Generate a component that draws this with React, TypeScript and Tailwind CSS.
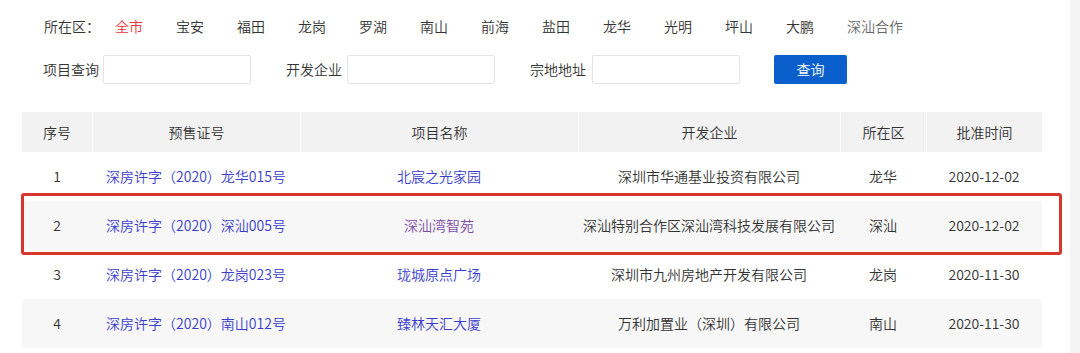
import React from "react";

const districts = ["全市", "宝安", "福田", "龙岗", "罗湖", "南山", "前海", "盐田", "龙华", "光明", "坪山", "大鹏", "深汕合作"];

type Row = { no: string; cert: string; name: string; dev: string; area: string; date: string; visited?: boolean };

const rows: Row[] = [
  { no: "1", cert: "深房许字（2020）龙华015号", name: "北宸之光家园", dev: "深圳市华通基业投资有限公司", area: "龙华", date: "2020-12-02" },
  { no: "2", cert: "深房许字（2020）深汕005号", name: "深汕湾智苑", dev: "深汕特别合作区深汕湾科技发展有限公司", area: "深汕", date: "2020-12-02", visited: true },
  { no: "3", cert: "深房许字（2020）龙岗023号", name: "珑城原点广场", dev: "深圳市九州房地产开发有限公司", area: "龙岗", date: "2020-11-30" },
  { no: "4", cert: "深房许字（2020）南山012号", name: "臻林天汇大厦", dev: "万利加置业（深圳）有限公司", area: "南山", date: "2020-11-30" },
];

const headers = ["序号", "预售证号", "项目名称", "开发企业", "所在区", "批准时间"];

export default function App() {
  return (
    <div className="flex h-[353px] w-[1080px] overflow-hidden bg-white font-['Noto_Sans_CJK_SC',sans-serif] text-[14px] font-[350] text-[#333]">
      <div className="relative flex-1">
        {/* District filter */}
        <div className="flex items-center pl-[44px] pt-[17px] leading-[18px]">
          <span className="w-[71px]">所在区：</span>
          {districts.map((d, i) => (
            <span
              key={d}
              className={
                i === 0
                  ? "w-[61px] text-[#e8363c]"
                  : d === "深汕合作"
                  ? "w-[61px] whitespace-nowrap text-[#666]"
                  : "w-[61px]"
              }
            >
              {d}
            </span>
          ))}
        </div>

        {/* Search row */}
        <div className="mt-[19px] flex h-[30px] items-center pl-[43px]">
          <span className="w-[60px]">项目查询</span>
          <div className="h-[29px] w-[148px] rounded-[2px] border border-[#e3e3e3] bg-white" />
          <span className="ml-[35px] w-[61px]">开发企业</span>
          <div className="h-[29px] w-[148px] rounded-[2px] border border-[#e3e3e3] bg-white" />
          <span className="ml-[35px] w-[62px]">宗地地址</span>
          <div className="h-[29px] w-[148px] rounded-[2px] border border-[#e3e3e3] bg-white" />
          <button className="ml-[34px] flex h-[29px] w-[73px] items-center justify-center rounded-[2px] bg-[#0b5fcc] text-[14px] text-white">
            查询
          </button>
        </div>

        {/* Table */}
        <div className="ml-[22px] mt-[28px] w-[1020px]">
          <div className="grid h-[40px] grid-cols-[70px_208px_278px_262px_86px_116px] bg-[#f2f2f2]">
            {headers.map((h, i) => (
              <div
                key={h}
                className={
                  i === 0
                    ? "flex items-center justify-center"
                    : "flex items-center justify-center border-l border-[#fbfbfb]"
                }
              >
                {h}
              </div>
            ))}
          </div>
          {rows.map((r, idx) => (
            <div
              key={r.no}
              className={
                idx % 2 === 1
                  ? "grid h-[49px] grid-cols-[70px_208px_278px_262px_86px_116px] bg-[#f7f7f7]"
                  : "grid h-[49px] grid-cols-[70px_208px_278px_262px_86px_116px] bg-white"
              }
            >
              <div className="flex items-center justify-center">{r.no}</div>
              <div className="flex items-center justify-center whitespace-nowrap text-[#3b3dcc]">{r.cert}</div>
              <div className={r.visited ? "flex items-center justify-center text-[#7d4aa8]" : "flex items-center justify-center text-[#3b3dcc]"}>
                {r.name}
              </div>
              <div className="flex items-center justify-center whitespace-nowrap">{r.dev}</div>
              <div className="flex items-center justify-center">{r.area}</div>
              <div className="flex items-center justify-center">{r.date}</div>
            </div>
          ))}
        </div>

        {/* Red annotation box */}
        <div className="pointer-events-none absolute left-[21px] top-[193px] h-[62px] w-[1041px] rounded-[3px] border-[3px] border-[#d8352d]" />
      </div>
      <div className="w-[10px] bg-[#f4f4f4]" />
    </div>
  );
}
